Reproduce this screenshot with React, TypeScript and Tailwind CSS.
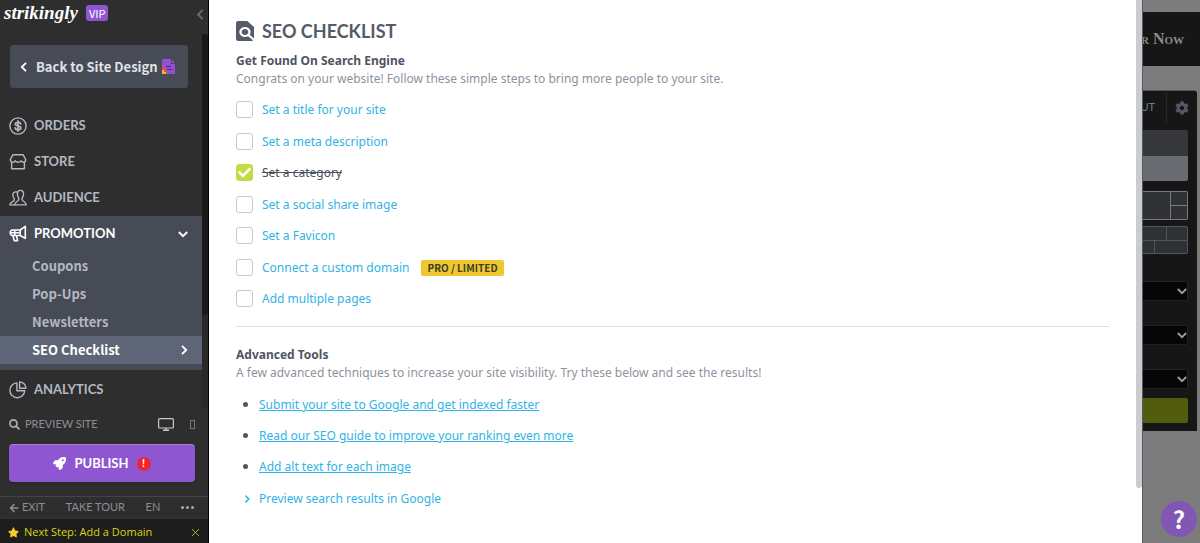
import React from 'react';
import { FaArrowLeft, FaCheck, FaRocket, FaSearch, FaStar, FaCog } from 'react-icons/fa';
import { clsx } from 'clsx';

type NavItem = {
  label: string;
  icon: React.ReactNode;
};

type ChecklistItem = {
  id: string;
  label: string;
  done?: boolean;
  badge?: string;
};

const lineIcon = {
  viewBox: '0 0 18 18',
  fill: 'none',
  stroke: 'currentColor',
  strokeWidth: 1.4,
  strokeLinejoin: 'round' as const,
  strokeLinecap: 'round' as const,
  className: 'size-[18px] shrink-0',
  'aria-hidden': true,
};

const OrdersIcon = () => (
  <svg {...lineIcon}>
    <circle cx="9" cy="9" r="8.1" />
    <path d="M11.7 6.9C11.5 5.8 10.500 5.300 9 5.300C7.400 5.300 6.300 6 6.300 7.100C6.300 9.600 11.800 8.300 11.800 10.900C11.800 12 10.700 12.700 9 12.700C7.300 12.700 6.300 12 6.200 10.900M9 3.900V14.100" strokeWidth="1.700" />
  </svg>
);

const StoreIcon = () => (
  <svg {...lineIcon}>
    <path d="M4 1.700H14L16.700 6.500C16.700 8.400 15.600 9.200 14.400 9.200C13.200 9.200 12.500 8.500 12.100 7.800C11.700 8.700 10.500 9.200 9.200 9.200C7.700 9.200 6.700 8.700 6.200 7.800C5.700 8.700 4.900 9.200 3.800 9.200C2.400 9.200 1.300 8.200 1.300 6.500L4 1.700ZM2.600 9.200V15.700H15.400V9.200" />
  </svg>
);

const AudienceIcon = () => (
  <svg {...lineIcon}>
    <path d="M11.400 1.400C9 1.400 8.200 3.200 8.400 5.200C8.500 7 9.200 8.200 9.700 9V10.900C9.300 12.300 6 12.700 5.600 15.900H17.200C16.900 12.700 13.500 12.300 13.100 10.900V9C13.900 8.100 14.400 6.800 14.500 5.200C14.700 3 13.700 1.400 11.400 1.400Z" />
    <path d="M7.800 3C5 2.300 3.600 3.900 3.900 6.300C4 7.800 4.600 8.900 5.200 9.600V11.200C4.700 12.700 1.200 12.900 .8 15.900H5.600" />
  </svg>
);

const PromotionIcon = () => (
  <svg {...lineIcon} strokeWidth={1.600}>
    <path d="M16.300 1.300V13.400L11.200 10.500H3.800C.4 10.500 .4 5 3.800 5H11.200L16.300 1.300ZM11.200 5V10.500M1.500 7.700H11.200M5.700 5V10.500M3.800 10.500L5.400 15.700H8.600L7.400 10.500" />
  </svg>
);

const AnalyticsIcon = () => (
  <svg {...lineIcon}>
    <path d="M7.900 1.900A7.400 7.400 0 1 0 15.700 9.700H7.900V1.900Z" />
    <path d="M10.600 .9V7.200H16.900A6.400 6.400 0 0 0 10.600 .9Z" />
  </svg>
);

const Chevron = ({ className }: { className?: string }) => (
  <svg viewBox="0 0 10 10" fill="none" stroke="currentColor" strokeWidth="1.900" className={clsx('shrink-0', className)} aria-hidden>
    <path d="M3 .8L7.200 5L3 9.200" />
  </svg>
);

const navItems: NavItem[] = [
  { label: 'ORDERS', icon: <OrdersIcon /> },
  { label: 'STORE', icon: <StoreIcon /> },
  { label: 'AUDIENCE', icon: <AudienceIcon /> },
];

const promotionLinks = ['Coupons', 'Pop-Ups', 'Newsletters', 'SEO Checklist'];

const checklist: ChecklistItem[] = [
  { id: 'title', label: 'Set a title for your site' },
  { id: 'meta', label: 'Set a meta description' },
  { id: 'category', label: 'Set a category', done: true },
  { id: 'share', label: 'Set a social share image' },
  { id: 'favicon', label: 'Set a Favicon' },
  { id: 'domain', label: 'Connect a custom domain', badge: 'PRO / LIMITED' },
  { id: 'pages', label: 'Add multiple pages' },
];

const advancedLinks = [
  'Submit your site to Google and get indexed faster',
  'Read our SEO guide to improve your ranking even more',
  'Add alt text for each image',
];

const navRow = 'flex h-9 w-full items-center gap-[7px] pl-[9px] text-[13px] font-bold';

function Sidebar() {
  return (
    <aside className="flex w-[209px] shrink-0 flex-col border-r border-black bg-[#2e2e2e] font-['Lato',sans-serif] text-[#b4b8c2]">
      <header className="flex h-[34px] items-start justify-between pl-1">
        <div className="flex items-center gap-2 pt-[3px]">
          <a href="#home" className="font-['Liberation_Serif',serif] text-[19px] leading-5 font-bold text-white italic">
            strikingly
          </a>
          <span className="rounded-[3px] bg-[#8e57d1] px-[3px] font-['Noto_Sans_CJK_SC',sans-serif] text-[11px] leading-4 text-white">VIP</span>
        </div>
        <button type="button" aria-label="Collapse sidebar" className="mt-[9px] mr-[2px] text-[#626a7c]">
          <Chevron className="size-[11px] rotate-180" />
        </button>
      </header>

      <div className="flex">
        <nav className="min-w-0 flex-1">
          <div className="pt-[11px] pr-[14px] pb-5 pl-[10px]">
            <button
              type="button"
              className="flex h-[43px] w-full items-center rounded-[3px] bg-[#474b56] pl-[9px] font-['Noto_Sans_CJK_SC',sans-serif] text-[13px] font-bold whitespace-nowrap text-[#e0e2e6]"
            >
              <Chevron className="mr-[7px] size-[10px] rotate-180 text-white" />
              Back to Site Design
              <svg viewBox="0 0 14 15" className="ml-1 h-[15px] w-[14px] shrink-0" aria-hidden>
                <path d="M1 0H9V5H13V15H0V1Z" fill="#9052d2" />
                <path d="M10 1L13 4H10Z" fill="#9052d2" />
                <path d="M0 7L3 9L6 15H0Z" fill="#e5485f" />
                <path d="M0 11H2V13H4V15H0Z" fill="#f0b73a" />
                <path d="M4 7.500H9M5 10.500H10" stroke="#4b2b78" />
              </svg>
            </button>
          </div>

          {navItems.map((item) => (
            <a key={item.label} href={`#${item.label.toLowerCase()}`} className={navRow}>
              {item.icon}
              {item.label}
            </a>
          ))}

          <div className="bg-[#474b56] pb-[6px]">
            <button type="button" className={clsx(navRow, 'pr-[14px] text-white')}>
              <PromotionIcon />
              PROMOTION
              <Chevron className="ml-auto size-[10px] rotate-90" />
            </button>
            <ul className="font-['Noto_Sans_CJK_SC',sans-serif] text-[13px] font-bold">
              {promotionLinks.map((label) => {
                const active = label === 'SEO Checklist';
                return (
                  <li key={label}>
                    <a
                      href="#promotion"
                      className={clsx(
                        'flex items-center justify-between pr-[13px] pl-8 leading-7',
                        active ? 'bg-[#5d6576] text-white' : 'text-[#b4b8c2]'
                      )}
                    >
                      {label}
                      {active && <Chevron className="size-[10px]" />}
                    </a>
                  </li>
                );
              })}
            </ul>
          </div>

          <a href="#analytics" className={clsx(navRow, 'mt-[2px]')}>
            <AnalyticsIcon />
            ANALYTICS
          </a>
        </nav>
        <div className="w-[6px] bg-[#292929]">
          <div className="h-3/4 rounded-full bg-[#191919]" />
        </div>
      </div>

      <div className="px-[9px] pt-[6px]">
        <div className="flex items-center text-[11px] leading-5 text-[#8a8e98]">
          <FaSearch className="mr-[5px] size-[11px] text-[#a5a9b3]" />
          PREVIEW SITE
          <button type="button" aria-label="Desktop preview" className="ml-auto text-[#c5c9d1]">
            <svg viewBox="0 0 16 13" className="h-[13px] w-4" fill="none" stroke="currentColor" aria-hidden>
              <rect x=".6" y=".6" width="14.800" height="9.400" rx="1" strokeWidth="1.200" />
              <path d="M8 10V12M5 12.300H11" strokeWidth="1.400" />
            </svg>
          </button>
          <button type="button" aria-label="Mobile preview" className="mr-1 ml-4">
            <svg viewBox="0 0 5 9" className="h-[9px] w-[5px]" fill="none" stroke="#73777f" aria-hidden>
              <rect x=".5" y=".5" width="4" height="8" />
            </svg>
          </button>
        </div>
        <button
          type="button"
          className="mt-[10px] flex h-[38px] w-full max-w-[186px] items-center justify-center gap-2 rounded-[4px] border-t border-[#a983da] bg-[#8e57d1] text-[13px] font-bold text-white shadow"
        >
          <FaRocket className="size-[13px]" />
          PUBLISH
          <span className="flex size-[14px] items-center justify-center rounded-full bg-[#f4222e] text-[11px]">!</span>
        </button>
      </div>

      <footer className="mt-auto">
        <div className="flex h-[22px] items-center justify-between border-t border-[#444] pr-[14px] pl-[9px] text-[11px] text-[#8a8e98]">
          <a href="#exit" className="flex items-center gap-[3px]">
            <FaArrowLeft className="size-[10px]" />
            EXIT
          </a>
          <a href="#tour">TAKE TOUR</a>
          <a href="#language">EN</a>
          <button type="button" aria-label="More" className="flex gap-[2px]">
            <i className="size-[3px] rounded-full bg-[#a5a9b3]" />
            <i className="size-[3px] rounded-full bg-[#a5a9b3]" />
            <i className="size-[3px] rounded-full bg-[#a5a9b3]" />
          </button>
        </div>
        <div className="flex h-[25px] items-center border-t border-[#333] bg-[#1d1d1d] px-2 pt-[2px] font-['Open_Sans',sans-serif] text-[11px] text-[#dcd414]">
          <FaStar className="mr-[5px] size-[11px] text-[#f0d02a]" />
          <a href="#domain">Next Step: Add a Domain</a>
          <button type="button" aria-label="Dismiss" className="ml-auto">
            <svg viewBox="0 0 9 9" className="size-[9px]" stroke="#b5ae1c" aria-hidden>
              <path d="M1 1L8 8M8 1L1 8" />
            </svg>
          </button>
        </div>
      </footer>
    </aside>
  );
}

function ChecklistRow({ item }: { item: ChecklistItem }) {
  return (
    <li className="flex items-center py-[5px] odd:pb-[6px]">
      <span className="relative flex">
        <input
          id={item.id}
          type="checkbox"
          defaultChecked={item.done}
          className="peer size-[17px] appearance-none rounded-[3px] border border-[#c6c9cd] bg-white checked:border-[#c2dc43] checked:bg-[#c2dc43]"
        />
        <FaCheck className="pointer-events-none absolute top-[2px] left-[2px] hidden size-[13px] text-white peer-checked:block" />
      </span>
      <label htmlFor={item.id} className={clsx('ml-[9px] leading-[21px]', item.done ? 'text-[#4b505a] line-through' : 'text-[#31b3e5]')}>
        {item.label}
      </label>
      {item.badge && (
        <span className="ml-3 rounded-[2px] bg-[#f0c730] px-[6px] font-['Noto_Sans_CJK_SC',sans-serif] text-[10px] leading-4 font-bold text-[#37411f]">
          {item.badge}
        </span>
      )}
    </li>
  );
}

function SeoChecklist() {
  return (
    <main className="flex min-w-0 flex-1 items-start bg-white font-['Noto_Sans',sans-serif] text-xs text-[#8d939e]">
      <div className="min-w-0 flex-1 pt-5 pr-[27px] pl-[27px]">
        <h1 className="flex items-center gap-2 font-['Lato',sans-serif] text-lg leading-[22px] font-bold text-[#555b68]">
          <svg viewBox="4 2 16 20" preserveAspectRatio="none" className="h-5 w-[18px]" fill="currentColor" aria-hidden>
            <path d="M20 19.590V8l-6-6H6c-1.100 0-1.990.9-1.990 2L4 20c0 1.100.890 2 1.990 2H18c.450 0 .850-.150 1.190-.400l-4.430-4.430c-.800.520-1.740.830-2.760.830-2.760 0-5-2.240-5-5s2.240-5 5-5 5 2.240 5 5c0 1.020-.310 1.960-.830 2.750L20 19.590zM9 13c0 1.660 1.340 3 3 3s3-1.340 3-3-1.340-3-3-3-3 1.340-3 3z" />
          </svg>
          SEO CHECKLIST
        </h1>

        <section className="border-b border-[#dedfe1] pt-[10px] pb-[11px]">
          <h2 className="leading-[18px] font-bold text-[#50555f]">Get Found On Search Engine</h2>
          <p className="leading-[18px]">Congrats on your website! Follow these simple steps to bring more people to your site.</p>
          <ul className="pt-[6px]">
            {checklist.map((item) => (
              <ChecklistRow key={item.id} item={item} />
            ))}
          </ul>
        </section>

        <section className="pt-[19px]">
          <h2 className="leading-[18px] font-bold text-[#50555f]">Advanced Tools</h2>
          <p className="leading-[18px]">A few advanced techniques to increase your site visibility. Try these below and see the results!</p>
          <ul className="pt-[7px] leading-[31px] text-[#31b3e5]">
            {advancedLinks.map((label) => (
              <li key={label} className="flex items-center pl-[7px]">
                <span className="mr-[11px] size-[5px] rounded-full bg-[#50555f]" />
                <a href="#tools" className="underline">
                  {label}
                </a>
              </li>
            ))}
            <li className="flex items-center pt-px pl-[7px]">
              <Chevron className="mr-2 size-2" />
              <a href="#preview">Preview search results in Google</a>
            </li>
          </ul>
        </section>
      </div>
      <div className="h-[488px] w-[6px] rounded-b bg-[#cbccd0]" />
    </main>
  );
}

function EditorPreview() {
  return (
    <aside className="flex w-[58px] shrink-0 flex-col overflow-hidden border-l border-[#555a60] bg-[#7c7c7c] pt-3 font-['Lato',sans-serif]">
      <div className="flex h-[54px] items-center justify-end bg-[#161616] pr-4 font-['Liberation_Serif',serif] text-base font-bold whitespace-nowrap text-[#88898d] [font-variant-caps:small-caps]">
        r Now
      </div>

      <div className="mt-6 mr-[3px] rounded-tr-[3px] border-t border-[#4f5563] bg-[#161616] pb-2">
        <div className="flex h-[33px] items-center justify-end gap-[11px] pr-2 text-[11px] text-[#777a82]">
          <span>UT</span>
          <button type="button" aria-label="Section settings" className="flex h-8 items-center border-l border-[#282828] pl-2">
            <FaCog className="size-[14px] text-[#525866]" />
          </button>
        </div>
        <div className="mr-[9px]">
          <div className="mt-[6px] h-[26px] rounded-tr-[2px] bg-[#36373b]" />
          <div className="h-[25px] rounded-br-[2px] bg-[#6b6c72]" />
          <div className="mt-[10px] grid h-[29px] grid-cols-[1fr_17px] rounded-r-[2px] border border-l-0 border-[#777a82] bg-[#303135]">
            <div />
            <div className="grid grid-rows-2 divide-y divide-[#777a82] border-l border-[#777a82]">
              <div />
              <div />
            </div>
          </div>
          <div className="mt-[6px] grid h-7 grid-rows-2 rounded-r-[2px] border border-l-0 border-[#4f5563] bg-[#303135]">
            <div className="grid grid-cols-[1fr_20px] divide-x divide-[#4f5563]">
              <div />
              <div />
            </div>
            <div className="grid grid-cols-[12px_1fr] divide-x divide-[#4f5563] border-t border-[#4f5563]">
              <div />
              <div />
            </div>
          </div>
          <div className="mt-[27px] flex flex-col gap-6">
            {['Layout', 'Width', 'Spacing'].map((name) => (
              <div key={name} className="relative">
                <select aria-label={name} className="block h-5 w-full appearance-none rounded-r-[2px] border border-l-0 border-[#222] bg-[#060606]">
                  <option value="" />
                </select>
                <Chevron className="pointer-events-none absolute top-[5px] right-[1px] size-[10px] rotate-90 text-[#9a9ca3]" />
              </div>
            ))}
          </div>
          <button type="button" aria-label="Save" className="mt-[9px] block h-[25px] w-full rounded-r-[2px] bg-[#515c0e]" />
        </div>
      </div>
    </aside>
  );
}

export default function App() {
  return (
    <div className="relative flex min-h-screen">
      <Sidebar />
      <SeoChecklist />
      <EditorPreview />
      <button
        type="button"
        aria-label="Help"
        className="absolute right-[3px] bottom-[6px] size-9 rounded-full bg-[#8156b5] font-['Noto_Sans_CJK_SC',sans-serif] text-2xl leading-9 font-bold text-white"
      >
        ?
      </button>
    </div>
  );
}
